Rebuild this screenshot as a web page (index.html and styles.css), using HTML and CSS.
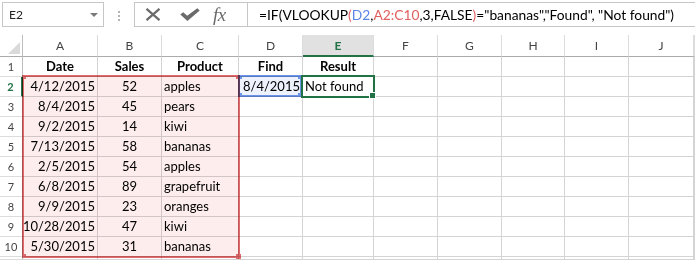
FILE: index.html
```html
<!DOCTYPE html>
<html>
<head>
<meta charset="utf-8">
<title>Excel VLOOKUP</title>
<link rel="stylesheet" href="styles.css">
</head>
<body>
<div class="app">
  <div class="topbar">
    <div class="namebox"><span class="nb-text">E2</span><span class="caret"></span></div>
    <div class="grip"><i></i><i></i><i></i></div>
    <div class="fbar">
      <div class="fbtns">
        <svg class="ic-x" width="16" height="13" viewBox="0 0 16 13"><path d="M1.5 0.8 L14.5 12.2 M14.5 0.8 L1.5 12.2" stroke="#6a6a6a" stroke-width="2.2" fill="none"/></svg>
        <svg class="ic-check" width="20" height="13" viewBox="0 0 20 13"><path d="M0.3 6.6 L3.2 4.2 L7.2 7.8 L17.3 0.2 L19.7 2.6 L7.4 12.9 Z" fill="#6a6a6a"/></svg>
        <span class="fx">fx</span>
      </div>
      <div class="formula">=IF(VLOOKUP<span class="ref-r">(</span><span class="ref-b">D2</span>,<span class="ref-r">A2:C10</span>,3,FALSE<span class="ref-r">)</span>="bananas","Found", "Not found")</div>
    </div>
  </div>
  <div class="sheet">
    <div class="grid">
      <div class="corner"><span class="tri"></span></div>
      <div class="ch">A</div><div class="ch">B</div><div class="ch">C</div><div class="ch">D</div><div class="ch sel-col">E</div><div class="ch">F</div><div class="ch">G</div><div class="ch">H</div><div class="ch">I</div><div class="ch">J</div><div class="ch"></div>

      <div class="rh">1</div><div class="c b ctr">Date</div><div class="c b ctr">Sales</div><div class="c b ctr">Product</div><div class="c b ctr">Find</div><div class="c b ctr">Result</div><div class="c"></div><div class="c"></div><div class="c"></div><div class="c"></div><div class="c"></div><div class="c"></div>

      <div class="rh sel-row">2</div><div class="c r">4/12/2015</div><div class="c ctr">52</div><div class="c l">apples</div><div class="c r">8/4/2015</div><div class="c l">Not found</div><div class="c"></div><div class="c"></div><div class="c"></div><div class="c"></div><div class="c"></div><div class="c"></div>

      <div class="rh">3</div><div class="c r">8/4/2015</div><div class="c ctr">45</div><div class="c l">pears</div><div class="c"></div><div class="c"></div><div class="c"></div><div class="c"></div><div class="c"></div><div class="c"></div><div class="c"></div><div class="c"></div>

      <div class="rh">4</div><div class="c r">9/2/2015</div><div class="c ctr">14</div><div class="c l">kiwi</div><div class="c"></div><div class="c"></div><div class="c"></div><div class="c"></div><div class="c"></div><div class="c"></div><div class="c"></div><div class="c"></div>

      <div class="rh">5</div><div class="c r">7/13/2015</div><div class="c ctr">58</div><div class="c l">bananas</div><div class="c"></div><div class="c"></div><div class="c"></div><div class="c"></div><div class="c"></div><div class="c"></div><div class="c"></div><div class="c"></div>

      <div class="rh">6</div><div class="c r">2/5/2015</div><div class="c ctr">54</div><div class="c l">apples</div><div class="c"></div><div class="c"></div><div class="c"></div><div class="c"></div><div class="c"></div><div class="c"></div><div class="c"></div><div class="c"></div>

      <div class="rh">7</div><div class="c r">6/8/2015</div><div class="c ctr">89</div><div class="c l">grapefruit</div><div class="c"></div><div class="c"></div><div class="c"></div><div class="c"></div><div class="c"></div><div class="c"></div><div class="c"></div><div class="c"></div>

      <div class="rh">8</div><div class="c r">9/9/2015</div><div class="c ctr">23</div><div class="c l">oranges</div><div class="c"></div><div class="c"></div><div class="c"></div><div class="c"></div><div class="c"></div><div class="c"></div><div class="c"></div><div class="c"></div>

      <div class="rh">9</div><div class="c r">10/28/2015</div><div class="c ctr">47</div><div class="c l">kiwi</div><div class="c"></div><div class="c"></div><div class="c"></div><div class="c"></div><div class="c"></div><div class="c"></div><div class="c"></div><div class="c"></div>

      <div class="rh">10</div><div class="c r">5/30/2015</div><div class="c ctr">31</div><div class="c l">bananas</div><div class="c"></div><div class="c"></div><div class="c"></div><div class="c"></div><div class="c"></div><div class="c"></div><div class="c"></div><div class="c"></div>

      <div class="rh"></div><div class="c"></div><div class="c"></div><div class="c"></div><div class="c"></div><div class="c"></div><div class="c"></div><div class="c"></div><div class="c"></div><div class="c"></div><div class="c"></div><div class="c"></div>
    </div>

    <div class="range-red">
      <i class="h tl"></i><i class="h tr"></i><i class="h bl"></i><i class="h br"></i>
    </div>
    <div class="range-blue">
      <i class="h tl"></i><i class="h tr"></i><i class="h bl"></i><i class="h br"></i>
    </div>
    <div class="active-cell"><i class="fill-handle"></i></div>
  </div>
</div>
</body>
</html>
```
FILE: styles.css
```css
html, body {
  margin: 0;
  padding: 0;
  background: #ffffff;
}
body {
  width: 695px;
  height: 260px;
  overflow: hidden;
  font-family: Lato, "Liberation Sans", sans-serif;
  color: #000;
}
.app {
  width: 695px;
  height: 260px;
  overflow: hidden;
}

/* ---------- top bar ---------- */
.topbar {
  height: 35px;
  box-sizing: border-box;
  padding-top: 2px;
  display: flex;
  align-items: flex-start;
}
.namebox {
  margin-left: 2px;
  width: 102px;
  height: 25px;
  box-sizing: border-box;
  border: 1px solid #c6c6c6;
  display: flex;
  align-items: center;
  justify-content: space-between;
  padding: 0 5px 0 6px;
  font-size: 12px;
  color: #222;
}
.caret {
  width: 0;
  height: 0;
  border-left: 4px solid transparent;
  border-right: 4px solid transparent;
  border-top: 4px solid #7a7a7a;
}
.grip {
  width: 30px;
  height: 25px;
  box-sizing: border-box;
  padding-top: 9px;
  display: flex;
  flex-direction: column;
  align-items: center;
  gap: 2px;
}
.grip i {
  display: block;
  width: 2px;
  height: 2px;
  background: #b4b4b4;
}
.fbar {
  flex: 1;
  height: 25px;
  box-sizing: border-box;
  border: 1px solid #c6c6c6;
  border-right: none;
  display: flex;
}
.fbtns {
  width: 113px;
  box-sizing: border-box;
  border-right: 1px solid #c6c6c6;
  display: flex;
  align-items: center;
  padding-left: 10px;
}
.ic-x { display: block; }
.ic-check { display: block; margin-left: 19px; }
.fx {
  margin-left: 13px;
  font-family: "Liberation Serif", serif;
  font-style: italic;
  font-size: 19px;
  color: #6a6a6a;
  line-height: 23px;
  letter-spacing: -0.5px;
}
.formula {
  padding-left: 11px;
  font-size: 13.8px;
  line-height: 23px;
  white-space: nowrap;
  color: #000;
}
.ref-b { color: #5b86e6; }
.ref-r { color: #e0605e; }

/* ---------- sheet ---------- */
.sheet {
  position: relative;
  height: 225px;
}
.grid {
  display: grid;
  grid-template-columns: 23px 75px 64px 77px 64px 71px 64px 64px 63px 64px 65px 1fr;
  grid-template-rows: 22px repeat(10, 20px) 1fr;
  height: 225px;
}
.grid > div {
  box-sizing: border-box;
  overflow: hidden;
  white-space: nowrap;
}
.corner {
  border-right: 1px solid #bdbdbd;
  border-bottom: 1px solid #ababab;
  display: flex;
  align-items: flex-end;
  justify-content: flex-end;
  padding: 0 2px 2px 0;
}
.tri {
  display: block;
  width: 12px;
  height: 12px;
  background: #dadada;
  clip-path: polygon(100% 0, 100% 100%, 0 100%);
}
.ch {
  border-right: 1px solid #dcdcdc;
  border-bottom: 1px solid #ababab;
  text-align: center;
  font-size: 12px;
  line-height: 21px;
  color: #444;
}
.ch.sel-col {
  background: #e1e1e1;
  color: #217346;
  font-weight: 700;
  border-bottom: 2px solid #217346;
}
.rh {
  border-right: 1px solid #bdbdbd;
  border-bottom: 1px solid #dcdcdc;
  text-align: center;
  font-size: 11px;
  line-height: 19px;
  color: #444;
}
.rh.sel-row {
  color: #217346;
  font-weight: 700;
  border-right: 2px solid #217346;
  background: #fff;
}
.c {
  border-right: 1px solid #d4d4d4;
  border-bottom: 1px solid #d4d4d4;
  font-size: 13px;
  line-height: 19px;
}
.c.b { font-weight: 700; }
.c.r { text-align: right; padding-right: 2px; }
.c.ctr { text-align: center; }
.c.l { text-align: left; padding-left: 2px; }

/* ---------- overlays ---------- */
.range-red {
  position: absolute;
  left: 22px;
  top: 40px;
  width: 218px;
  height: 183px;
  box-sizing: border-box;
  border: 2px solid #e36a6a;
  background: #fdeded;
  mix-blend-mode: multiply;
}
.range-blue {
  position: absolute;
  left: 238px;
  top: 40px;
  width: 64px;
  height: 22px;
  box-sizing: border-box;
  border: 2px solid #6b93e8;
  background: #edf2fc;
  mix-blend-mode: multiply;
}
.h {
  position: absolute;
  width: 4px;
  height: 4px;
}
.range-red .h { background: #e36a6a; }
.range-blue .h { background: #6b93e8; }
.h.tl { left: -2px; top: -2px; }
.h.tr { right: -2px; top: -2px; }
.h.bl { left: -2px; bottom: -2px; }
.h.br { right: -2px; bottom: -2px; }
.range-red .h.br { width: 5px; height: 5px; right: -3px; bottom: -3px; }

.active-cell {
  position: absolute;
  left: 301px;
  top: 40px;
  width: 74px;
  height: 23px;
  box-sizing: border-box;
  border: 2px solid #217346;
}
.fill-handle {
  position: absolute;
  right: -3px;
  bottom: -3px;
  width: 5px;
  height: 5px;
  background: #217346;
  border: 1px solid #fff;
}
```
